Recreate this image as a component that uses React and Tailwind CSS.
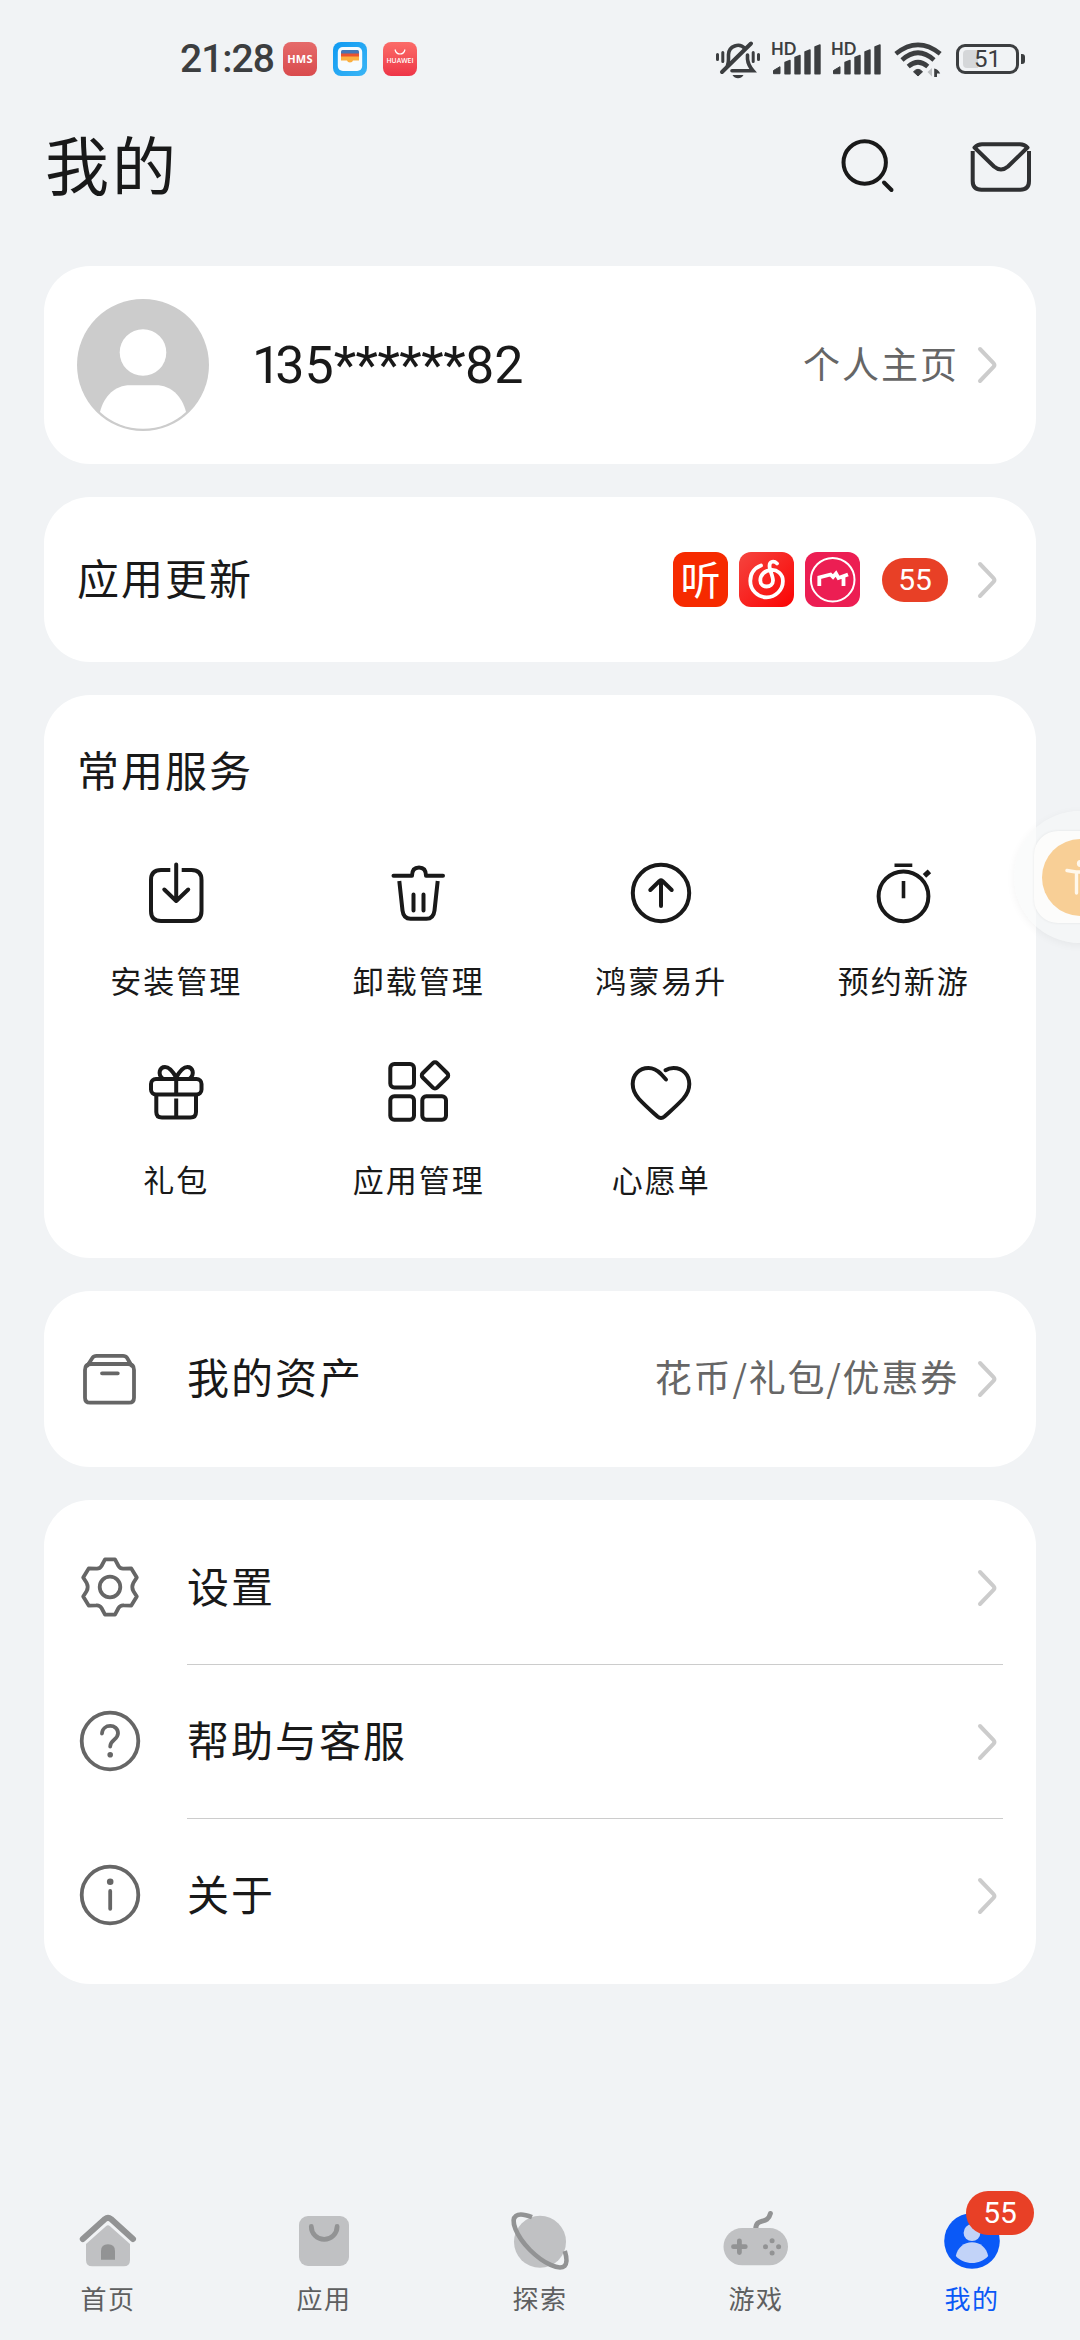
import React from 'react';

const Icon = ({ children, size = 66, width = 4, className }) => (
  <svg
    width={size}
    height={size}
    viewBox={`0 0 ${size} ${size}`}
    fill="none"
    stroke="currentColor"
    strokeWidth={width}
    strokeLinecap="round"
    strokeLinejoin="round"
    className={`shrink-0 ${className || ''}`}
  >
    {children}
  </svg>
);

const Chevron = () => (
  <svg width="26" height="40" viewBox="0 0 26 40" fill="none" stroke="#cccccc" strokeWidth="4" strokeLinecap="round" className="shrink-0">
    <path d="M3 4 L16.5 18 Q18.3 20 16.5 22 L3 36" />
  </svg>
);

const Badge = ({ children, className }) => (
  <span className={`flex h-[44px] items-center justify-center rounded-full bg-[#e84026] font-['Roboto',sans-serif] text-[30px] leading-none text-white ${className}`}>
    {children}
  </span>
);

const Card = ({ children, className }) => (
  <section className={`rounded-[46px] bg-white px-[33px] ${className}`}>{children}</section>
);

const Signal = () => (
  <svg width="52" height="40" viewBox="0 0 52 40" fill="#3c3e40">
    <text x="0" y="16" fontFamily="Lato, sans-serif" fontWeight="700" fontSize="16.5">HD</text>
    <path d="M2.5 34.7V31.5L9 27.7V34.7Z" stroke="#3c3e40" strokeWidth="1" strokeLinejoin="round" />
    <path d="M14 34.7V23.5L19 21.5V34.7Z" stroke="#3c3e40" strokeWidth="1.4" strokeLinejoin="round" />
    <path d="M24 34.7V18.5L29 16.5V34.7Z" stroke="#3c3e40" strokeWidth="1.4" strokeLinejoin="round" />
    <path d="M34 34.7V13L39 11V34.7Z" stroke="#3c3e40" strokeWidth="1.4" strokeLinejoin="round" />
    <path d="M44 34.7V8L49 6V34.7Z" stroke="#3c3e40" strokeWidth="1.4" strokeLinejoin="round" />
  </svg>
);

const StatusBar = () => (
  <div className="flex h-[118px] shrink-0 items-center pr-[55px] pl-[180px]">
    <span className="w-[103px] font-['Roboto',sans-serif] text-[39px] leading-none font-medium tracking-[-1px] text-[#3c3e40]">21:28</span>
    <div className="flex gap-4">
      <span className="flex size-[34px] items-center justify-center rounded-[8px] bg-linear-to-b from-[#e56a6a] to-[#d94a4d] font-['Open_Sans',sans-serif] text-[11px] font-bold tracking-[0.3px] text-white">
        HMS
      </span>
      <svg width="34" height="34" viewBox="0 0 34 34">
        <defs>
          <linearGradient id="wallet" x1="0" y1="0" x2="1" y2="1">
            <stop offset="0" stopColor="#0f9af2" />
            <stop offset="1" stopColor="#3bb5f5" />
          </linearGradient>
        </defs>
        <rect width="34" height="34" rx="8" fill="url(#wallet)" />
        <rect x="4.8" y="5" width="24.4" height="24" rx="5" fill="#f6fbfe" />
        <path d="M8 14V9.5Q8 8 9.5 8H24.5Q26 8 26 9.5V14Z" fill="#4377b5" />
        <path d="M8 11.5H26V15H8Z" fill="#e8532e" />
        <path d="M8 14.5H26V18.5H20Q19.5 20.5 17 20.5T14 18.5H8Z" fill="#fbb040" />
      </svg>
      <span className="flex size-[34px] flex-col items-center rounded-[8px] bg-linear-to-b from-[#fb6b68] to-[#ee3347] pt-[7px] text-white">
        <svg width="12" height="6" viewBox="0 0 12 6" fill="none" stroke="white" strokeWidth="1.2">
          <path d="M1 .5Q2 5 6 5T11 .5" />
        </svg>
        <span className="mt-[1px] font-['Open_Sans',sans-serif] text-[6.8px] leading-[10px] font-semibold">HUAWEI</span>
      </span>
    </div>

    <div className="ml-auto flex items-center">
      <svg width="46" height="40" viewBox="0 0 46 40" fill="none" stroke="#3c3e40" strokeWidth="3.6" strokeLinecap="round">
        <path d="M12.5 26.5Q13.5 24 13.5 20V15.5A9.5 9.5 0 0 1 30 9.5" />
        <path d="M32.5 16V20Q33 26 38 31.7H17" />
        <path d="M7 33L36 4.5" strokeWidth="4" />
        <path d="M17.5 36H28.5Q26.5 39.2 23 39.2T17.5 36Z" fill="#3c3e40" stroke="none" />
        <path d="M2.5 15.5V20.5M7.8 13.5V22.5M38.2 13.5V22.5M43.5 15.5V20.5" strokeWidth="3" />
      </svg>
      <span className="ml-[10px]"><Signal /></span>
      <span className="ml-[8px]"><Signal /></span>
      <svg width="50" height="40" viewBox="0 0 50 40" fill="none" stroke="#3c3e40" strokeWidth="4.6" className="ml-[11px]">
        <path d="M1.8 14.8Q24 -3 46.2 14.8" />
        <path d="M8 21Q24 6.5 40 21" />
        <path d="M14.2 27.5Q24 19 33.8 27.5" />
        <path d="M24 37L19.5 32.8Q24 27.8 28.5 32.8Z" fill="#3c3e40" stroke="#3c3e40" strokeWidth="1" />
        <path d="M38 29V37.5L33.5 33Z" fill="#bfc1c3" stroke="none" />
        <path d="M40.2 38V29.5Q44 30 46.2 34.5H43V38Z" fill="#3c3e40" stroke="none" />
      </svg>
      <div className="ml-[12px] flex items-center gap-[2px]">
        <div className="relative flex h-[30px] w-[63px] items-center justify-center rounded-[9px] border-[3px] border-[#3c3e40]">
          <span className="absolute top-[3px] left-[4px] h-[18px] w-[15px] rounded-l-[4px] bg-[#d5d7d9]" />
          <span className="relative font-['Roboto',sans-serif] text-[24px] leading-none text-[#3c3e40]">51</span>
        </div>
        <span className="h-[10px] w-[4px] rounded-r-[3px] bg-[#3c3e40]" />
      </div>
    </div>
  </div>
);

const Header = () => (
  <header className="flex h-[96px] shrink-0 items-center justify-between pr-[46px] pl-[45px] text-[#191919]">
    <h1 className="-mt-2 text-[64px] leading-[90px] font-normal tracking-[3px]">我的</h1>
    <div className="flex gap-[67px]">
      <Icon>
        <circle cx="29.7" cy="29.5" r="21.2" />
        <path d="M49 49.5L56.5 57" />
      </Icon>
      <Icon className="text-[#2f3032]">
        <path d="M4.7 18V48Q4.7 56.7 13.4 56.7H52.3Q61 56.7 61 48V18" strokeLinecap="butt" />
        <path d="M6.5 14.5L26 33.5Q33 39.5 40 33.5L59.5 14.5Q56.5 11.3 52 11.3H14Q9.5 11.3 6.5 14.5Z" />
      </Icon>
    </div>
  </header>
);

const UpdateIcons = () => (
  <div className="flex gap-[11px]">
    <span className="flex size-[55px] items-center justify-center rounded-[12px] bg-[#f62a00] pb-1 text-[40px] leading-none font-normal text-white">听</span>
    <svg width="55" height="55" viewBox="0 0 55 55" fill="none" stroke="white" strokeWidth="3.8" strokeLinecap="round">
      <defs>
        <linearGradient id="music" x1="0" y1="0" x2="1" y2="1">
          <stop offset="0" stopColor="#f5453f" />
          <stop offset="1" stopColor="#fb0303" />
        </linearGradient>
      </defs>
      <rect width="55" height="55" rx="12" fill="url(#music)" stroke="none" />
      <path d="M22 13.5C14.5 16.5 11.3 22.5 11.3 29A16.3 16.3 0 0 0 43.9 29C43.9 22 38 17.5 32 18C25.5 18.5 21.3 23 21.3 28.5C21.3 36.5 34 36.5 34 28.5C34 24 30.5 18 30.5 14C30.5 9 35 8.5 38 11.5" />
    </svg>
    <svg width="55" height="55" viewBox="0 0 55 55" fill="none" stroke="white">
      <rect width="55" height="55" rx="12" fill="#ec1e53" stroke="none" />
      <circle cx="27.7" cy="27.7" r="21.8" strokeWidth="2" />
      <path d="M14.3 34V25.5L25.5 22.5L28 25L31 21.5L33.5 26L43 22.5M38.5 24.5V34" strokeWidth="3.8" />
    </svg>
  </div>
);

const services = [
  {
    label: '安装管理',
    icon: (
      <>
        <path d="M27.3 10H18Q8 10 8 20V51Q8 61 18 61H48.5Q58.5 61 58.5 51V20Q58.5 10 48.5 10H38.7" strokeLinecap="butt" />
        <path d="M33.2 4.5V41M21.3 29.5L33.2 41L45.2 29.5" />
      </>
    ),
  },
  {
    label: '卸载管理',
    icon: (
      <>
        <path d="M7.5 15.8H26Q26 7.4 33 7.4T40 15.8H57" />
        <path d="M13.3 21L16.5 50.5Q17.5 58.8 24.5 58.8H40.5Q47.5 58.8 48.5 50.5L51.7 21" strokeLinecap="butt" />
        <path d="M27.5 34.5V50.5M37.5 34.5V50.5" />
      </>
    ),
  },
  {
    label: '鸿蒙易升',
    icon: (
      <>
        <circle cx="33" cy="33" r="28.2" />
        <path d="M33 46V20.5M22.3 30L31.5 21Q33 19.8 34.5 21L43.7 30" />
      </>
    ),
  },
  {
    label: '预约新游',
    icon: (
      <>
        <circle cx="32.5" cy="36.3" r="24.9" />
        <path d="M25.3 5.3H39.5M32.5 22.8V36.5" strokeLinecap="square" strokeWidth="3.6" />
        <path d="M55.3 14.2L56.6 13" strokeWidth="5" strokeLinecap="square" />
      </>
    ),
  },
  {
    label: '礼包',
    icon: (
      <>
        <rect x="8" y="20" width="50.5" height="15.5" rx="5" />
        <path d="M13.3 36V53Q13.3 58.6 19 58.6H47.5Q53 58.6 53 53V36" />
        <path d="M33.2 20V35M33.2 39.5V58" strokeLinecap="butt" />
        <path d="M33.2 18.5C30 12.5 26.5 7.9 22 7.9C16.5 7.9 14.5 15 19.5 19.5M33.2 18.5C36.4 12.5 39.9 7.9 44.4 7.9C49.9 7.9 51.9 15 46.9 19.5" />
      </>
    ),
  },
  {
    label: '应用管理',
    icon: (
      <>
        <rect x="4.3" y="5.1" width="23.7" height="23.5" rx="4" />
        <rect x="4.3" y="37.3" width="23.7" height="23.5" rx="4" />
        <rect x="36.3" y="37.3" width="23.7" height="23.5" rx="4" />
        <rect x="38.8" y="6.2" width="20.4" height="20.4" rx="3" transform="rotate(45 49 16.4)" />
      </>
    ),
  },
  {
    label: '心愿单',
    icon: (
      <path d="M38 20.5L33 15C29 11 25 9 20.5 9C11 9 4.7 16 4.7 25C4.7 31 7 35.5 11 40C17 46.5 24 52.5 29.5 57.5Q33 60.5 36.5 57.5C42 52.5 49 46.5 55 40C59 35.5 61.3 31 61.3 25C61.3 16 55 9 45.5 9Q41 9 37.5 11.2" />
    ),
  },
];

const menu = [
  {
    label: '设置',
    icon: (
      <>
        <path d="M28 5.3H38L41.5 12Q43.3 15 46.8 14.6L54.3 14.4L59.8 23.4L56.3 29Q54.3 33 56.3 37L59.8 42.6L54.3 51.6L46.8 51.4Q43.3 51 41.5 54L38 60.7H28L24.5 54Q22.7 51 19.2 51.4L11.7 51.6L6.2 42.6L9.7 37Q11.7 33 9.7 29L6.2 23.4L11.7 14.4L19.2 14.6Q22.7 15 24.5 12Z" />
        <circle cx="33" cy="33" r="10.3" />
      </>
    ),
  },
  {
    label: '帮助与客服',
    icon: (
      <>
        <circle cx="33" cy="33" r="28.3" />
        <path d="M25 25.5C25.5 15.5 41 15.5 41 25.3C41 32 33.2 31.5 33.2 38.5" />
        <circle cx="33.2" cy="46.7" r="2.8" fill="currentColor" stroke="none" />
      </>
    ),
  },
  {
    label: '关于',
    icon: (
      <>
        <circle cx="33" cy="33" r="28.3" />
        <circle cx="33.2" cy="19.7" r="3.3" fill="currentColor" stroke="none" />
        <path d="M33.2 29V46.8" />
      </>
    ),
  },
];

const tabs = [
  {
    label: '首页',
    icon: (
      <>
        <path d="M34 21.2Q36 19.5 38 21.2L58 39V55Q58 61.3 51.7 61.3H20.3Q14 61.3 14 55V39Z" fill="#c0c1c3" stroke="none" />
        <path d="M10.8 34L33 14Q36 11.6 39 14L61 34" stroke="#929394" strokeWidth="6" />
        <path d="M29 54.7V46Q29 39.3 36 39.3T43 46V54.7Z" fill="#929394" stroke="none" />
      </>
    ),
  },
  {
    label: '应用',
    icon: (
      <>
        <rect x="11" y="11" width="50" height="50" rx="9" fill="#c0c1c3" stroke="none" />
        <path d="M23.3 21.5A12.9 12.9 0 0 0 49.1 21.5V21.5" stroke="#929394" strokeWidth="4.8" />
      </>
    ),
  },
  {
    label: '探索',
    icon: (
      <>
        <circle cx="36" cy="36.8" r="26" fill="#c0c1c3" stroke="none" />
        <path d="M10.5 17Q12.5 12.5 20 13.5L14 20.5Z" fill="#f1f3f5" stroke="none" />
        <path d="M62 50L54 56.5L58 60L61.5 58Z" fill="#f1f3f5" stroke="none" />
        <path d="M28 12.2C22 9.8 15 8.6 12 10.8C6 15 12 30.5 26 45C40 59 55.5 65.5 60.5 61C63 58.5 63 53 60.8 46" stroke="#929394" strokeWidth="4.6" strokeLinecap="butt" />
      </>
    ),
  },
  {
    label: '游戏',
    icon: (
      <>
        <path d="M35.8 24C35.8 12 47.5 20.5 50.4 8.5" stroke="#929394" strokeWidth="5" />
        <rect x="3.5" y="23" width="64.5" height="37.3" rx="18.6" fill="#c0c1c3" stroke="none" />
        <path d="M13.5 41.7H25.3M19.4 35.8V47.6" stroke="#929394" strokeWidth="4.8" />
        <g fill="#929394" stroke="none">
          <circle cx="52.1" cy="35.7" r="2.5" />
          <circle cx="52.1" cy="48" r="2.5" />
          <circle cx="45.5" cy="41.7" r="2.5" />
          <circle cx="58.6" cy="41.7" r="2.5" />
        </g>
      </>
    ),
  },
  {
    label: '我的',
    active: true,
    badge: 55,
    icon: (
      <g stroke="none">
        <circle cx="36" cy="36" r="27.8" fill="#0a59f7" />
        <circle cx="36" cy="27.7" r="8.4" fill="#c2d3f8" />
        <path d="M19.8 51C21.5 42.5 28 37.3 36 37.3S50.5 42.5 52.2 51C48 55.7 42 58 36 58S24 55.7 19.8 51Z" fill="#c2d3f8" />
      </g>
    ),
  },
];

const Profile = () => (
  <Card className="flex h-[198px] items-center">
    <svg width="132" height="132" viewBox="0 0 132 132">
      <circle cx="66" cy="66" r="66" fill="#cccccc" />
      <circle cx="66" cy="53.5" r="23.3" fill="white" />
      <path d="M23 113C27 97 38 86.3 53 86.3H79C94 86.3 105 97 109 113A63.3 63.3 0 0 1 23 113Z" fill="white" />
    </svg>
    <span className="mt-[2px] ml-[43px] font-['Roboto',sans-serif] text-[52px] leading-none text-[#191919]">
      <span className="tracking-[-6px]">1</span>35<span className="tracking-[-0.5px]">******</span>82
    </span>
    <span className="mr-[18px] ml-auto -mt-1 text-[37px] leading-[50px] tracking-[2px] text-[#666666]">个人主页</span>
    <Chevron />
  </Card>
);

const FloatingButton = () => (
  <div className="absolute top-[811px] left-[1014px] flex size-[132px] items-center justify-center rounded-full bg-[#f7f8f9]/60 shadow-[0_2px_8px_rgba(0,0,0,0.05)]">
    <div className="flex size-[92px] items-center justify-center rounded-[24px] bg-[#fcfcfb] shadow-[0_0_3px_rgba(0,0,0,0.08)]">
      <svg width="77" height="77" viewBox="0 0 77 77" fill="none" stroke="#fff8ec" strokeWidth="3.4" strokeLinecap="round">
        <circle cx="38.5" cy="38.5" r="38.5" fill="#f8cf96" stroke="none" />
        <circle cx="38.5" cy="24.5" r="3.6" fill="#fff8ec" stroke="none" />
        <path d="M25 31.5L34 33H43L52 31.5M34.5 33V54M42.5 33V54" />
      </svg>
    </div>
  </div>
);

const App = () => (
  <div className="relative flex h-[2340px] w-[1080px] flex-col overflow-hidden bg-[#f1f3f5] font-['Noto_Sans_CJK_SC',sans-serif] text-[#191919]">
    <StatusBar />
    <Header />

    <main className="mt-[52px] flex flex-col gap-[33px] px-[44px]">
      <Profile />

      <Card className="flex h-[165px] items-center">
        <span className="-mt-[6px] mr-auto text-[42px] leading-[60px] tracking-[2px]">应用更新</span>
        <UpdateIcons />
        <Badge className="mr-[29px] ml-[22px] w-[66px]">55</Badge>
        <Chevron />
      </Card>

      <Card className="h-[563px] pt-[44px]">
        <h2 className="text-[42px] leading-[60px] font-normal tracking-[2px]">常用服务</h2>
        <div className="-mx-[22px] mt-[61px] grid grid-cols-4 gap-y-[56px]">
          {services.map((item) => (
            <div key={item.label} className="flex h-[143px] flex-col items-center">
              <Icon>{item.icon}</Icon>
              <span className="mt-[32px] text-[31px] leading-[44px] tracking-[2px]">{item.label}</span>
            </div>
          ))}
        </div>
      </Card>

      <Card className="flex h-[176px] items-center">
        <Icon width={3.8} className="text-[#666666]">
          <path d="M8 24Q8 18 14 18H51Q57 18 57 24V51.7Q57 56.7 52 56.7H13Q8 56.7 8 51.7Z" />
          <path d="M10.5 19.5L15.5 11.8Q16.8 9.8 19.5 9.8H46Q48.7 9.8 50 11.8L54.5 19.5M25 27.3H40.8" />
        </Icon>
        <span className="-mt-[6px] mr-auto ml-[44px] text-[42px] leading-[60px] tracking-[2px]">我的资产</span>
        <span className="-mt-[6px] mr-[18px] text-[37px] leading-[50px] tracking-[1.8px] text-[#666666]">花币/礼包/优惠券</span>
        <Chevron />
      </Card>

      <Card className="h-[484px] pt-[11px]">
        {menu.map((item, i) => (
          <div key={item.label} className="flex h-[154px] items-center gap-[44px]">
            <Icon width={3.8} className="-mt-[2px] text-[#666666]">{item.icon}</Icon>
            <div className={`flex h-full flex-1 items-center justify-between border-b ${i < menu.length - 1 ? 'border-[#cccccc]' : 'border-transparent'}`}>
              <span className="-mt-[6px] text-[42px] leading-[60px] tracking-[2px]">{item.label}</span>
              <Chevron />
            </div>
          </div>
        ))}
      </Card>
    </main>

    <nav className="mt-auto grid grid-cols-5 pb-[24px]">
      {tabs.map((tab) => (
        <div key={tab.label} className={`relative flex flex-col items-center ${tab.active ? 'text-[#0a59f7]' : 'text-[#5e5f60]'}`}>
          <Icon size={72}>{tab.icon}</Icon>
          <span className="mt-[3px] text-[26px] leading-[36px] tracking-[1.5px]">{tab.label}</span>
          {tab.badge && <Badge className="absolute -top-[14px] left-[102px] w-[68px]">{tab.badge}</Badge>}
        </div>
      ))}
    </nav>

    <FloatingButton />
  </div>
);

export default App;
